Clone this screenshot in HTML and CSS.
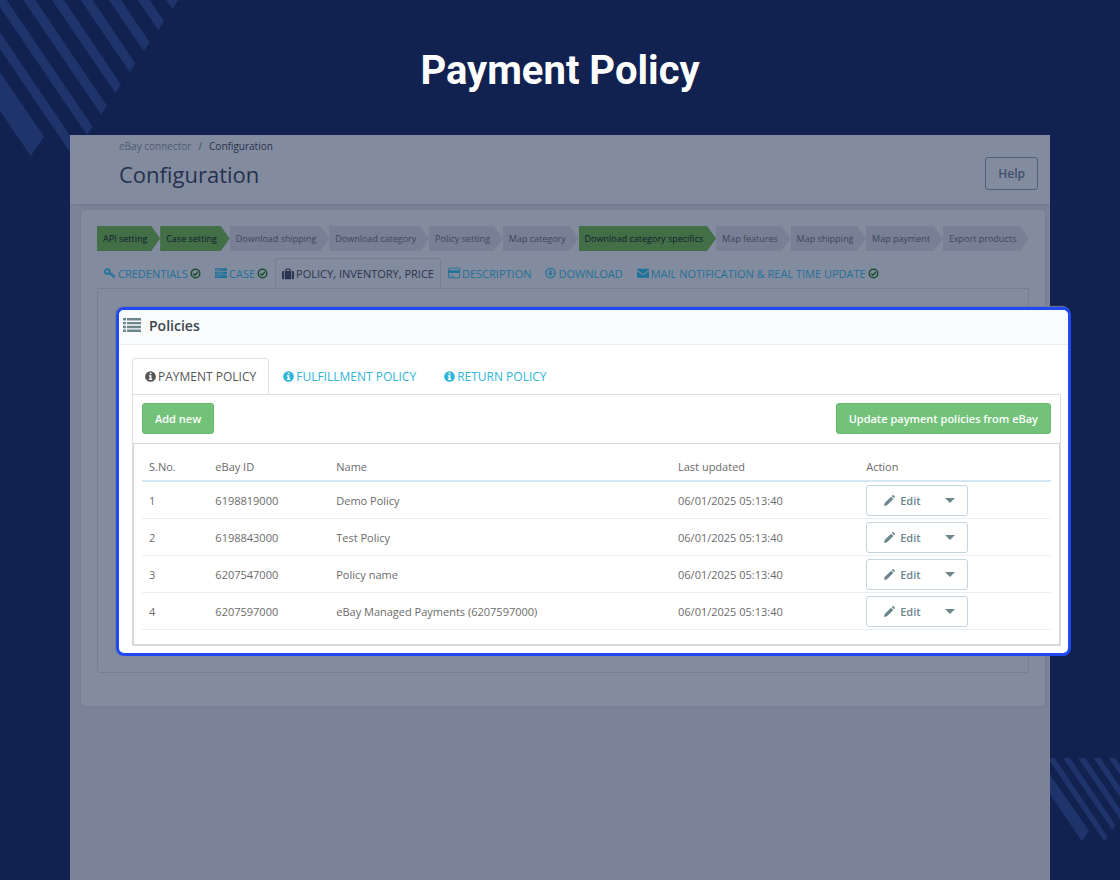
FILE: index.html
```
<!DOCTYPE html>
<html lang="en">
<head>
  <meta charset="UTF-8" />
  <meta name="viewport" content="width=device-width, initial-scale=1.0"/>
  <title>Payment Policy</title>
  <link rel="stylesheet" href="styles.css">
</head>
<body>
  <!-- shared icons -->
  <svg class="sprite" aria-hidden="true">
    <symbol id="i-check" viewBox="0 0 16 16">
      <circle cx="8" cy="8" r="6.2" fill="none" stroke="currentColor" stroke-width="2.2"/>
      <path d="M4.8 8l2.3 2.4 4.2-4.4" fill="none" stroke="currentColor" stroke-width="2.2"/>
    </symbol>
    <symbol id="i-key" viewBox="0 0 16 16">
      <circle cx="4.4" cy="6" r="3.1" fill="none" stroke="currentColor" stroke-width="2.4"/>
      <path d="M6.8 8.200l7.400 6M9.400 10.400l2-2.600M12.200 12.600l1.900-2.400" fill="none" stroke="currentColor" stroke-width="2"/>
    </symbol>
    <symbol id="i-server" viewBox="0 0 16 16">
      <path d="M0 1.5h16v3.6H0zM0 6.3h16v3.6H0zM0 11.1h16v3.6H0z" fill="currentColor"/>
      <path d="M2 3.3h5M2 8.1h9M2 12.9h4" stroke="#838b9e" stroke-width=".9"/>
    </symbol>
    <symbol id="i-case" viewBox="0 0 16 16">
      <path d="M5 4V2.4Q5 1.5 6 1.5h4q1 0 1 .9V4" fill="none" stroke="currentColor" stroke-width="1.4"/>
      <path d="M1.5 4H2.6v11H1.5Q0 15 0 13.5v-8Q0 4 1.5 4zM3.6 4h8.8v11H3.6zM13.4 4h1.1Q16 4 16 5.5v8q0 1.5-1.5 1.5h-1.1z" fill="currentColor"/>
    </symbol>
    <symbol id="i-card" viewBox="0 0 16 16">
      <rect x=".6" y="1.6" width="14.8" height="12.8" rx="1" fill="none" stroke="currentColor" stroke-width="1.2"/>
      <path d="M0 4.5h16v3.4H0z" fill="currentColor"/>
      <path d="M2.2 12h2M5.2 12h3" stroke="currentColor" stroke-width="1.2"/>
    </symbol>
    <symbol id="i-down" viewBox="0 0 16 16">
      <circle cx="8" cy="8" r="6.7" fill="none" stroke="currentColor" stroke-width="2"/>
      <path d="M6.8 3.8h2.4V8h2.6L8 12 4.200 8h2.600z" fill="currentColor"/>
    </symbol>
    <symbol id="i-mail" viewBox="0 0 16 16">
      <path d="M0 2.2h16v1.5L8 9.3 0 3.7zM0 5.4l8 5.6 8-5.6v8.8H0z" fill="currentColor"/>
    </symbol>
    <symbol id="i-info" viewBox="0 0 16 16">
      <circle cx="8" cy="8" r="7.8" fill="currentColor"/>
      <path d="M6.8 2.7h2.6v2.2H6.8zM5.6 6.2h3.8v5h1.2v1.9h-5v-1.9h1.2V8H5.6z" fill="#fff"/>
    </symbol>
    <symbol id="i-list" viewBox="0 0 18 14">
      <path d="M0 0h3v2.4H0zM4 0h14v2.4H4zM0 3.9h3v2.4H0zM4 3.9h14v2.4H4zM0 7.8h3v2.4H0zM4 7.8h14v2.4H4zM0 11.6h3V14H0zM4 11.6h14V14H4z" fill="currentColor"/>
    </symbol>
    <symbol id="i-pencil" viewBox="0 0 16 16">
      <path d="M0 16l1-4.4L10.2 2.4l3.4 3.4L4.4 15zM11.2 1.5l1-1q.9-.8 1.8 0L15.5 2q.8.9 0 1.8l-1 1z" fill="currentColor"/>
    </symbol>
  </svg>

  <svg class="stripes stripes-top" viewBox="0 0 540 480" aria-hidden="true">
    <path d="M0 216L132 410 92 468 0 333z"/>
    <path d="M0 97L235 443 218 468 0 147z"/>
    <path d="M-15 0H20L278 380 261 405z"/>
    <path d="M70 0H106L321 318 303 343z"/>
    <path d="M156 0H192L363 254 346 279z"/>
    <path d="M242 0H278L406 190 389 216z"/>
    <path d="M327 0H363L449 127 431 153z"/>
    <path d="M413 0H449L492 64 475 90z"/>
    <path d="M498 0H535L518 26z"/>
  </svg>
  <svg class="stripes stripes-bottom" viewBox="0 0 210 252" aria-hidden="true">
    <path d="M0 50L117 218 96 250 0 109z"/>
    <path d="M-7 0H14L173 236 163 250z"/>
    <path d="M39 0H60L196 201 187 216z"/>
    <path d="M85 0H106L210 154V184z"/>
    <path d="M131 0H151L210 87V116z"/>
    <path d="M176 0H196L210 21V50z"/>
  </svg>

  <h1 class="title">Payment Policy</h1>

  <main class="screen">
    <header class="page-head">
      <div>
        <nav class="breadcrumb"><a href="#">eBay connector</a><span class="slash">/</span><span>Configuration</span></nav>
        <h2>Configuration</h2>
      </div>
      <button class="help">Help</button>
    </header>

    <div class="card">
      <nav class="steps">
        <a href="#" class="done">API setting</a>
        <a href="#" class="done">Case setting</a>
        <a href="#">Download shipping</a>
        <a href="#">Download category</a>
        <a href="#">Policy setting</a>
        <a href="#">Map category</a>
        <a href="#" class="done">Download category specifics</a>
        <a href="#">Map features</a>
        <a href="#">Map shipping</a>
        <a href="#">Map payment</a>
        <a href="#">Export products</a>
      </nav>

      <nav class="tabs">
        <a href="#"><svg><use href="#i-key"/></svg>CREDENTIALS<svg class="ok"><use href="#i-check"/></svg></a>
        <a href="#"><svg><use href="#i-server"/></svg>CASE<svg class="ok"><use href="#i-check"/></svg></a>
        <a href="#" class="active"><svg><use href="#i-case"/></svg>POLICY, INVENTORY, PRICE</a>
        <a href="#"><svg><use href="#i-card"/></svg>DESCRIPTION</a>
        <a href="#"><svg class="round"><use href="#i-down"/></svg>DOWNLOAD</a>
        <a href="#"><svg><use href="#i-mail"/></svg>MAIL NOTIFICATION &amp; REAL TIME UPDATE<svg class="ok"><use href="#i-check"/></svg></a>
      </nav>

      <div class="tab-content">
        <section class="policies">
          <div class="policies-head">
            <svg><use href="#i-list"/></svg>
            <h3>Policies</h3>
          </div>
          <div class="policies-body">
            <nav class="policy-tabs">
              <a href="#" class="active"><svg><use href="#i-info"/></svg>PAYMENT POLICY</a>
              <a href="#"><svg><use href="#i-info"/></svg>FULFILLMENT POLICY</a>
              <a href="#"><svg><use href="#i-info"/></svg>RETURN POLICY</a>
            </nav>
            <div class="pane">
              <div class="toolbar">
                <button class="btn-green">Add new</button>
                <button class="btn-green">Update payment policies from eBay</button>
              </div>
              <div class="table-wrap">
                <table>
                  <colgroup>
                    <col class="c-no"><col class="c-id"><col class="c-name"><col class="c-date"><col>
                  </colgroup>
                  <thead>
                    <tr><th>S.No.</th><th>eBay ID</th><th>Name</th><th>Last updated</th><th>Action</th></tr>
                  </thead>
                  <tbody>
                    <tr>
                      <td>1</td><td>6198819000</td><td>Demo Policy</td><td>06/01/2025 05:13:40</td>
                      <td><div class="btn-group"><button class="edit"><svg><use href="#i-pencil"/></svg>Edit</button><button class="caret" aria-label="More actions"></button></div></td>
                    </tr>
                    <tr>
                      <td>2</td><td>6198843000</td><td>Test Policy</td><td>06/01/2025 05:13:40</td>
                      <td><div class="btn-group"><button class="edit"><svg><use href="#i-pencil"/></svg>Edit</button><button class="caret" aria-label="More actions"></button></div></td>
                    </tr>
                    <tr>
                      <td>3</td><td>6207547000</td><td>Policy name</td><td>06/01/2025 05:13:40</td>
                      <td><div class="btn-group"><button class="edit"><svg><use href="#i-pencil"/></svg>Edit</button><button class="caret" aria-label="More actions"></button></div></td>
                    </tr>
                    <tr>
                      <td>4</td><td>6207597000</td><td>eBay Managed Payments (6207597000)</td><td>06/01/2025 05:13:40</td>
                      <td><div class="btn-group"><button class="edit"><svg><use href="#i-pencil"/></svg>Edit</button><button class="caret" aria-label="More actions"></button></div></td>
                    </tr>
                  </tbody>
                </table>
              </div>
            </div>
          </div>
        </section>
      </div>
    </div>
  </main>
</body>
</html>
```

FILE: styles.css
```
:root {
  --bg-color: #112150;
  --stripe: #20346c;
  --page-bg: #7a8397;
  --card-bg: #838b9e;
  --dim-line: #757e92;
  --dim-blue: #1f7299;
  --blue: #2fb5d9;
  --slate: #6c868e;
  --green: #72c279;
}

* {
  box-sizing: border-box;
}

body {
  position: relative;
  display: flex;
  flex-direction: column;
  min-height: 100vh;
  margin: 0;
  padding: 0 70px;
  background-color: var(--bg-color);
  font-family: 'Open Sans', sans-serif;
  font-size: 11px;
  overflow-x: hidden;
}

a {
  color: inherit;
  text-decoration: none;
}

button {
  font-family: inherit;
  cursor: pointer;
}

.sprite {
  position: absolute;
  width: 0;
  height: 0;
}

.stripes {
  position: absolute;
  fill: var(--stripe);
}

.stripes-top {
  top: 0;
  left: 0;
  width: 180px;
  height: 160px;
}

.stripes-bottom {
  right: 0;
  bottom: 38px;
  width: 70px;
  height: 84px;
}

.title {
  margin: 0;
  padding: 47px 0 40px;
  font-family: Roboto, sans-serif;
  font-size: 40px;
  font-weight: 700;
  line-height: 48px;
  text-align: center;
  color: #fff;
}

.screen {
  position: relative;
  flex: 1;
  background: var(--page-bg);
}

.page-head {
  display: flex;
  justify-content: space-between;
  align-items: flex-start;
  padding: 3px 12px 14px 49px;
  background: var(--card-bg);
  border-bottom: 2px solid var(--dim-line);
}

.breadcrumb {
  font-size: 10px;
  line-height: 16px;
  color: #253250;
}

.breadcrumb a {
  color: #4f5a75;
}

.slash {
  margin: 0 7px;
  color: #2f5a50;
}

.page-head h2 {
  margin: 4px 0 0;
  font-size: 22px;
  font-weight: 400;
  line-height: 32px;
  color: #253250;
}

.help {
  margin-top: 19px;
  padding: 0 12px;
  height: 33px;
  border: 1px solid #4d6080;
  border-radius: 3px;
  background: none;
  font-size: 12px;
  font-weight: 600;
  color: #3f5070;
}

.card {
  margin: 4px 5px 0 11px;
  padding: 16px 16px 33px;
  background: var(--card-bg);
  border-radius: 4px;
  box-shadow: 0 0 2px 1px var(--dim-line);
}

.steps {
  display: flex;
}

.steps a {
  flex: 1 0 auto;
  padding: 0 12px 0 6px;
  background: #798095;
  clip-path: polygon(0 0, calc(100% - 9px) 0, 100% 50%, calc(100% - 9px) 100%, 0 100%);
  font-size: 9px;
  line-height: 25px;
  color: #3d4560;
}

.steps .done {
  background: #426f46;
  color: #0f1c32;
}

.tabs {
  display: flex;
  margin-top: 7px;
}

.tabs a {
  display: flex;
  align-items: center;
  gap: 2px;
  height: 30px;
  padding: 0 6px;
  border: 1px solid transparent;
  font-size: 11px;
  color: var(--dim-blue);
}

.tabs svg {
  width: 12px;
  height: 12px;
}

.tabs .ok {
  width: 11px;
  height: 11px;
  color: #1b4f2f;
}

.tabs .round {
  width: 11px;
}

.tabs .active {
  margin-bottom: -1px;
  border-color: var(--dim-line);
  border-bottom: 0;
  border-radius: 3px 3px 0 0;
  background: var(--card-bg);
  color: #2c3550;
}

.tab-content {
  padding: 18px 0 16px 18px;
  border: 1px solid var(--dim-line);
  border-radius: 0 0 3px 3px;
}

/* highlighted panel, runs past the right edge of the card */
.policies {
  margin-right: -43px;
  border: 3px solid #2049f5;
  border-radius: 8px;
  background: #fff;
  box-shadow: -1px -1px 1px var(--dim-line);
  overflow: hidden;
  color: #6b6b6b;
}

.policies-head {
  display: flex;
  align-items: center;
  gap: 8px;
  height: 35px;
  padding: 0 4px 4px;
  background: #fafbfd;
  border-bottom: 1px solid #e6eff3;
}

.policies-head svg {
  width: 18px;
  height: 14px;
  color: var(--slate);
}

.policies-head h3 {
  margin: 0;
  font-size: 14px;
  font-weight: 600;
  color: #3c444d;
}

.policies-body {
  padding: 13px 7px 7px 13px;
}

.policy-tabs {
  display: flex;
}

.policy-tabs a {
  display: flex;
  align-items: center;
  gap: 2px;
  height: 36px;
  padding: 0 13px;
  border: 1px solid transparent;
  border-bottom: 0;
  font-size: 12px;
  color: var(--blue);
}

.policy-tabs svg {
  width: 11px;
  height: 11px;
}

.policy-tabs .active {
  position: relative;
  margin-bottom: -1px;
  padding: 0 12px;
  border-color: #dfdfdf;
  border-radius: 4px 4px 0 0;
  background: #fff;
  color: #555;
}

.pane {
  border: 1px solid #dcdcdc;
}

.toolbar {
  display: flex;
  justify-content: space-between;
  padding: 8px 9px 9px;
}

.btn-green {
  height: 31px;
  padding: 0 12px;
  border: 1px solid #65ba6c;
  border-radius: 3px;
  background: var(--green);
  font-size: 11px;
  font-weight: 600;
  color: #fff;
}

.table-wrap {
  padding: 8px 8px 14px;
  border: 1px solid #d6d6d6;
}

table {
  width: 100%;
  border-collapse: separate;
  border-spacing: 0;
  table-layout: fixed;
}

.c-no {
  width: 7.3%;
}

.c-id {
  width: 13.3%;
}

.c-name {
  width: 37.6%;
}

.c-date {
  width: 20.7%;
}

th {
  height: 30px;
  padding: 0 7px;
  border-bottom: 2px solid #d3e8f2;
  font-weight: 400;
  text-align: left;
}

td {
  height: 37px;
  padding: 0 7px;
  border-bottom: 1px solid #e8eff2;
}

.btn-group {
  display: flex;
  width: 102px;
  height: 31px;
  border: 1px solid #c3d4da;
  border-radius: 3px;
}

.btn-group button {
  border: 0;
  background: none;
  color: var(--slate);
}

.edit {
  display: flex;
  flex: 1;
  align-items: center;
  gap: 5px;
  padding: 0 0 0 17px;
  font-size: 11px;
  font-weight: 600;
}

.edit svg {
  width: 11px;
  height: 11px;
}

.caret {
  width: 35px;
  padding: 0;
}

.caret::before {
  content: "";
  display: block;
  width: 0;
  margin: 0 auto;
  border: 5px solid transparent;
  border-top-color: var(--slate);
  border-bottom: 0;
}
```
